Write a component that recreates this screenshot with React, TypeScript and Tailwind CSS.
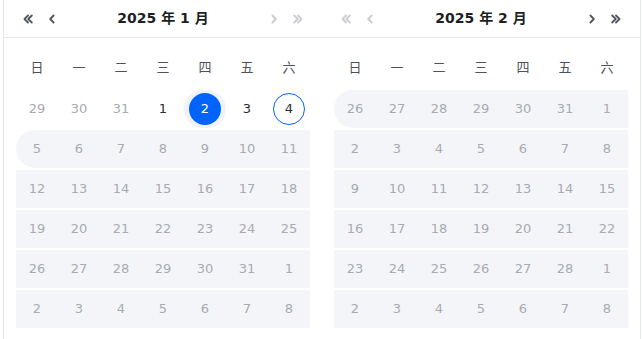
import React from "react";

const WEEK = ["日", "一", "二", "三", "四", "五", "六"];

type Cell = { d: number; kind?: "dim" | "normal" | "selected" | "outlined" };
type Row = { cells: Cell[]; band: boolean; start?: boolean };

const dim = (ns: number[]): Cell[] => ns.map((d) => ({ d, kind: "dim" }));
const range = (a: number, b: number) => Array.from({ length: b - a + 1 }, (_, i) => a + i);

const janRows: Row[] = [
  {
    band: false,
    cells: [
      ...dim([29, 30, 31]),
      { d: 1, kind: "normal" },
      { d: 2, kind: "selected" },
      { d: 3, kind: "normal" },
      { d: 4, kind: "outlined" },
    ],
  },
  { band: true, start: true, cells: dim(range(5, 11)) },
  { band: true, cells: dim(range(12, 18)) },
  { band: true, cells: dim(range(19, 25)) },
  { band: true, cells: dim([...range(26, 31), 1]) },
  { band: true, cells: dim(range(2, 8)) },
];

const febRows: Row[] = [
  { band: true, start: true, cells: dim([...range(26, 31), 1]) },
  { band: true, cells: dim(range(2, 8)) },
  { band: true, cells: dim(range(9, 15)) },
  { band: true, cells: dim(range(16, 22)) },
  { band: true, cells: dim([...range(23, 28), 1]) },
  { band: true, cells: dim(range(2, 8)) },
];

function Chevron({ double, disabled, right }: { double?: boolean; disabled?: boolean; right?: boolean }) {
  const d = double
    ? "M8 4.5L4.5 8L8 11.5M11.8 4.5L8.3 8L11.8 11.5"
    : "M9.6 4.5L6.2 8L9.6 11.5";
  return (
    <button className="w-6 h-6 flex items-center justify-center">
      <svg
        width="16"
        height="16"
        viewBox="0 0 16 16"
        className={`${disabled ? "text-[#cbcdd1]" : "text-[#55585d]"} ${right ? "-scale-x-100" : ""}`}
      >
        <path d={d} fill="none" stroke="currentColor" strokeWidth="1.9" strokeLinecap="round" strokeLinejoin="round" />
      </svg>
    </button>
  );
}

function DayCell({ cell }: { cell: Cell }) {
  if (cell.kind === "selected") {
    return (
      <div className="h-full flex items-center justify-center rounded-full bg-[#eff2fa]">
        <span className="w-8 h-8 rounded-full bg-[#0064fa] text-white flex items-center justify-center">{cell.d}</span>
      </div>
    );
  }
  if (cell.kind === "outlined") {
    return (
      <div className="h-full flex items-center justify-center">
        <span className="w-8 h-8 rounded-full border border-[#0064fa] text-[#2a2d32] flex items-center justify-center">
          {cell.d}
        </span>
      </div>
    );
  }
  return (
    <div
      className={`h-full flex items-center justify-center ${cell.kind === "normal" ? "text-[#2a2d32]" : "text-[#a9abb0]"}`}
    >
      {cell.d}
    </div>
  );
}

function Panel({ rows }: { rows: Row[] }) {
  return (
    <div className="w-[318px] px-3">
      <div className="mt-[10px] grid grid-cols-7 h-10 items-center text-[13px] text-[#4f5257]">
        {WEEK.map((w) => (
          <div key={w} className="text-center">{w}</div>
        ))}
      </div>
      {rows.map((r, i) => (
        <div
          key={i}
          className={`mt-[2px] h-[38px] grid grid-cols-7 text-[13px] ${r.band ? "bg-[#f4f5f8]" : ""} ${r.start ? "rounded-l-[19px]" : ""}`}
        >
          {r.cells.map((c, j) => (
            <DayCell key={j} cell={c} />
          ))}
        </div>
      ))}
    </div>
  );
}

function Header({ title, leftOff, rightOff }: { title: string; leftOff?: boolean; rightOff?: boolean }) {
  return (
    <div className="w-[318px] px-3 flex items-center h-[37px]">
      <Chevron double disabled={leftOff} />
      <Chevron disabled={leftOff} />
      <div className="flex-1 text-center text-[14px] font-bold text-[#1c1f23]">{title}</div>
      <Chevron disabled={rightOff} right />
      <Chevron double disabled={rightOff} right />
    </div>
  );
}

export default function App() {
  return (
    <div
      className="w-[642px] h-[339px] bg-white overflow-hidden"
      style={{ fontFamily: '"DejaVu Sans", "Noto Sans CJK SC", sans-serif' }}
    >
      <div className="ml-[3px] w-[638px] h-[339px] border-x border-[#e6e7e9]">
        <div className="flex border-b border-[#e6e7e9]">
          <Header title="2025 年 1 月" rightOff />
          <Header title="2025 年 2 月" leftOff />
        </div>
        <div className="flex">
          <Panel rows={janRows} />
          <Panel rows={febRows} />
        </div>
      </div>
    </div>
  );
}
